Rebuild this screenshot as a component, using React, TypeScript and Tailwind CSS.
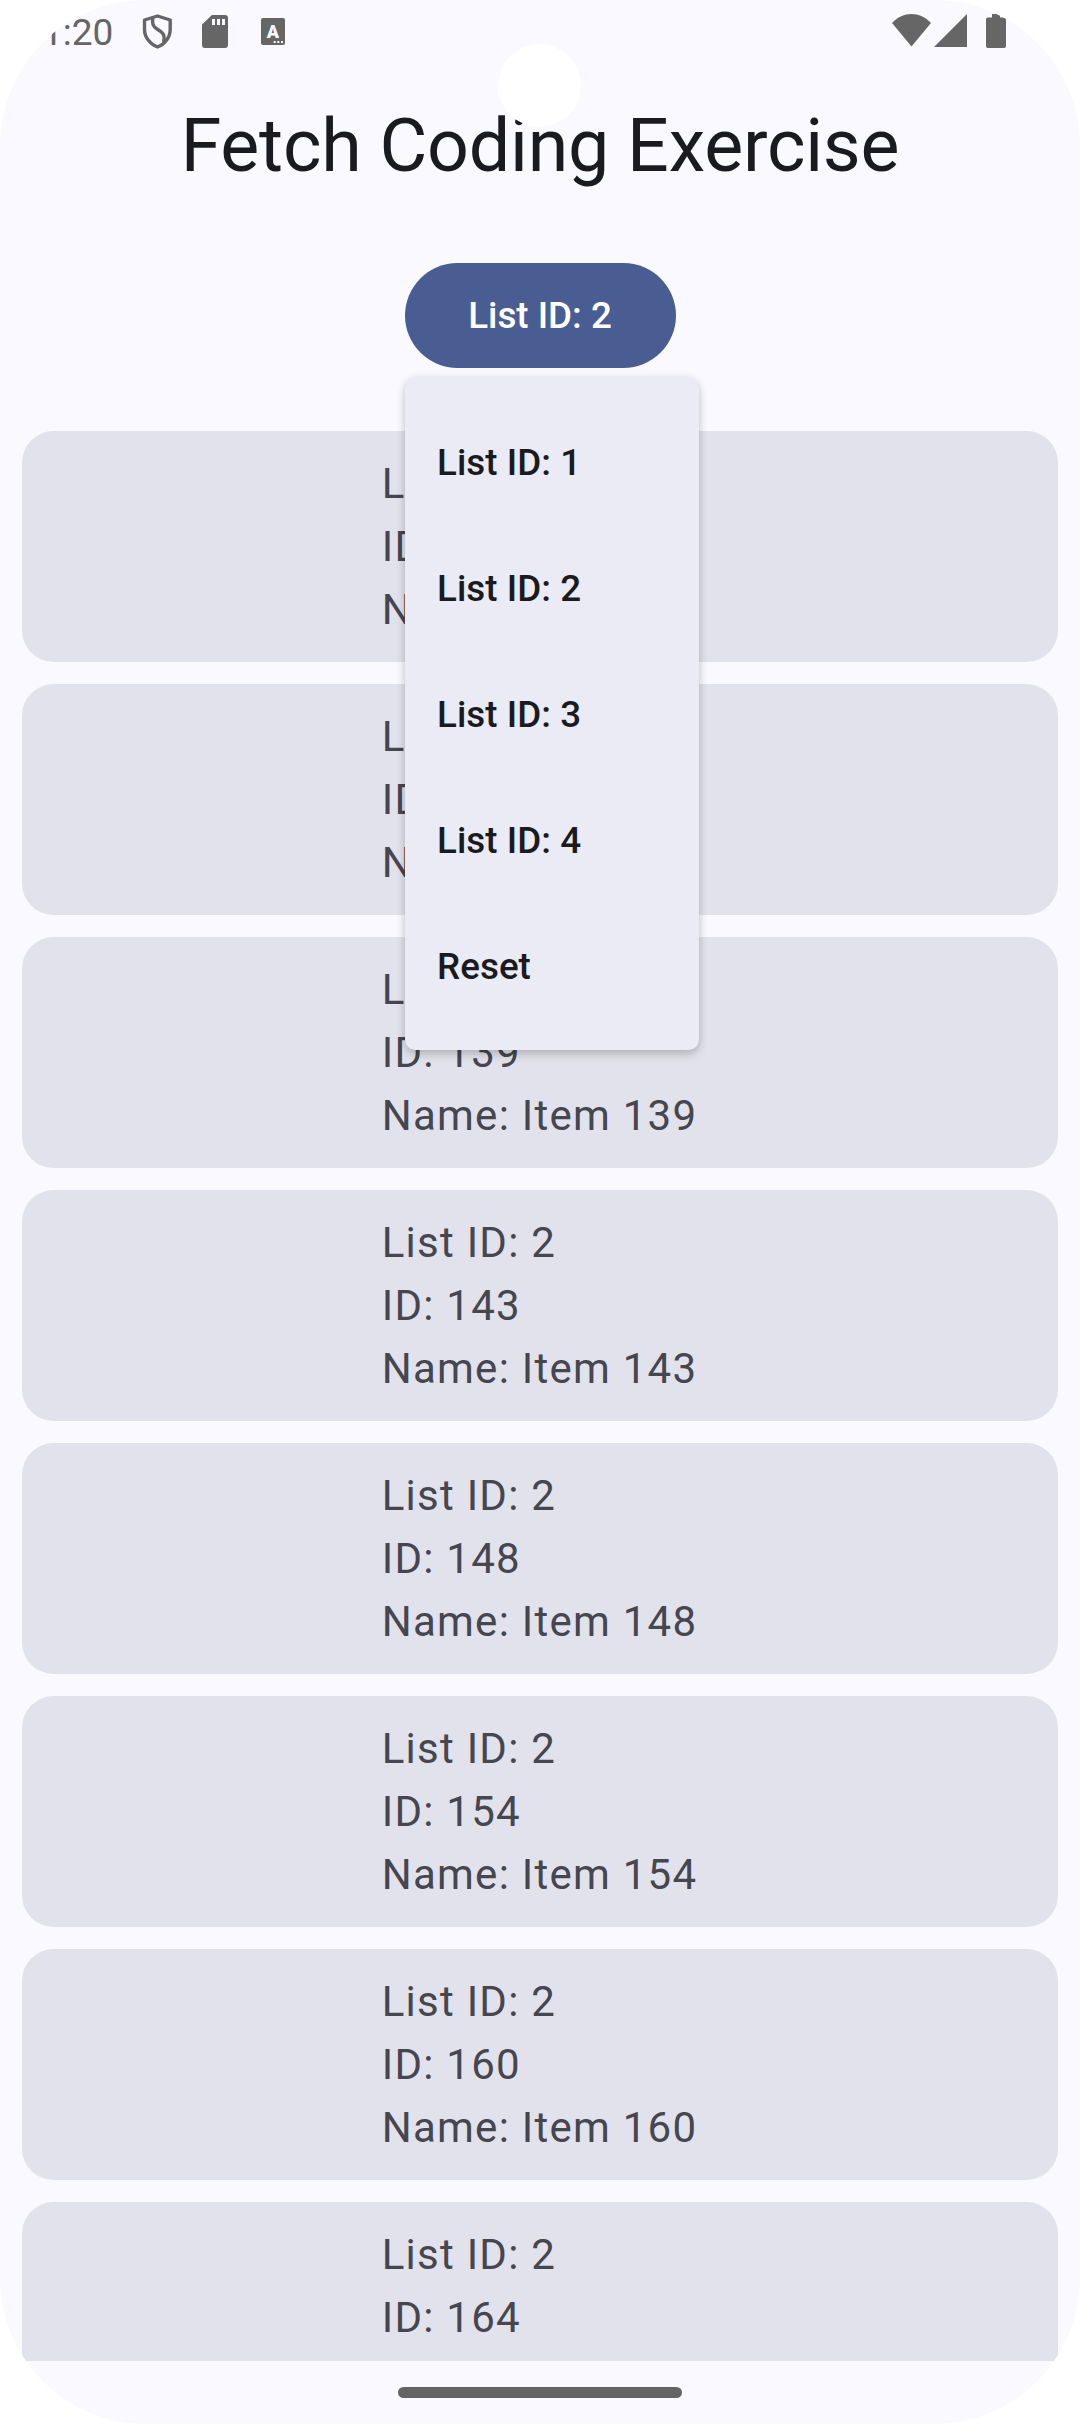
const OPTIONS = ["List ID: 1", "List ID: 2", "List ID: 3", "List ID: 4", "Reset"];
const ITEM_IDS = [132, 135, 139, 143, 148, 154, 160, 164];

function StatusBar() {
  return (
    <div className="flex h-[99px] items-start text-[#666666]">
      <div className="w-[142px] shrink-0 whitespace-nowrap pt-[11px] pl-[42px] text-[37px] leading-[43px]">
        1:20
      </div>
      <svg className="mt-[14px] h-[35px] w-[30px] shrink-0" viewBox="0 0 30 35" fill="none" stroke="currentColor" strokeWidth="3.4" strokeLinejoin="round">
        <path d="M15.500 2 L28.200 6 V15.500 C28.200 23.500 22.500 30.500 15.500 33 C8.500 30.500 2.500 23.500 2.500 15.500 V6 Z" />
        <path d="M11 4 C9.500 9 10.500 12 15 15 C21 18.500 23.500 21 21.500 28" />
      </svg>
      <svg className="mt-[15px] ml-[30px] h-[33px] w-[26px] shrink-0" viewBox="0 0 26 33" fill="currentColor">
        <path fillRule="evenodd" d="M10 0 H23 A3 3 0 0 1 26 3 V30 A3 3 0 0 1 23 33 H3 A3 3 0 0 1 0 30 V9.500 Z M10 4 V10 H13 V4 Z M15 4 V10 H18 V4 Z M20 4 V10 H23 V4 Z" />
      </svg>
      <svg className="mt-[18px] ml-[33px] h-[27px] w-[24px] shrink-0" viewBox="0 0 24 27">
        <rect width="24" height="27" rx="2" fill="currentColor" />
        <text x="12" y="20" textAnchor="middle" fontSize="18" fontWeight="900" fill="#f9f9ff">A</text>
        <path d="M12.700 23 h2 v2 h-2z M16.300 23 h2 v2 h-2z M20 23 h2 v2 h-2z" fill="#f9f9ff" />
      </svg>
      <div className="grow" />
      <svg className="mt-[14px] h-[33px] w-[39px] shrink-0" viewBox="0 0 39 33" fill="currentColor">
        <path d="M19.500 32.500 L0 9 C11 -3 28 -3 39 9 Z" />
      </svg>
      <svg className="mt-[14px] ml-[3px] h-[33px] w-[33px] shrink-0" viewBox="0 0 33 33" fill="currentColor">
        <path d="M33 0 V33 H0 Z" />
      </svg>
      <svg className="mt-[14px] mr-[74px] ml-[19px] h-[34px] w-[20px] shrink-0" viewBox="0 0 20 34" fill="currentColor">
        <path d="M6 0 H14 V3.500 H18 A2 2 0 0 1 20 5.500 V32 A2 2 0 0 1 18 34 H2 A2 2 0 0 1 0 32 V5.500 A2 2 0 0 1 2 3.500 H6 Z" />
      </svg>
    </div>
  );
}

function DropdownMenu() {
  return (
    <div className="absolute top-[114.5px] left-0 z-10 flex h-[672.5px] w-[294px] flex-col rounded-[10.5px] bg-[#ebebf5] pt-[22px] shadow-[0_5px_10px_rgba(0,0,0,0.16),0_0_8px_rgba(0,0,0,0.10)]">
      {OPTIONS.map((label) => (
        <div key={label} className="flex h-[126px] shrink-0 items-center pl-[32.5px] text-[36.75px] font-medium tracking-[0.05px] text-[#1a1b20]">
          {label}
        </div>
      ))}
    </div>
  );
}

function ItemCard({ id }: { id: number }) {
  return (
    <div className="flex h-[231px] shrink-0 justify-center rounded-[31.5px] bg-[#e2e2ec] py-[21px] text-[42px] leading-[63px] tracking-[1.25px] text-[#45464f]">
      <div className="mr-px whitespace-nowrap">
        <p>List ID: 2</p>
        <p>ID: {id}</p>
        <p>Name: Item {id}</p>
      </div>
    </div>
  );
}

export default function App() {
  return (
    <div className="h-[2424px] w-[1080px] overflow-hidden bg-white font-[Roboto,sans-serif]">
      <div className="relative flex h-full flex-col overflow-hidden rounded-[146px] bg-[#f9f9ff]">
        <StatusBar />
        <h1 className="h-[164px] text-center text-[73.5px] leading-[94px] tracking-[-0.22px] text-[#1a1b20]">Fetch Coding Exercise</h1>
        <div className="flex h-[168px] justify-center">
          <div className="relative h-[105px] w-[271px]">
            <button className="h-full w-full rounded-full bg-[#495d92] text-[36.75px] font-medium text-white">
              List ID: 2
            </button>
            <DropdownMenu />
          </div>
        </div>
        <div className="flex h-[1930px] flex-col gap-[22px] overflow-hidden px-[22px]">
          {ITEM_IDS.map((id) => (
            <ItemCard key={id} id={id} />
          ))}
        </div>
        <div className="mx-auto mt-[26px] h-[11px] w-[284px] rounded-full bg-[#646466]" />
        <div className="absolute top-[44px] left-[498px] size-[83px] rounded-full bg-white" />
      </div>
    </div>
  );
}
